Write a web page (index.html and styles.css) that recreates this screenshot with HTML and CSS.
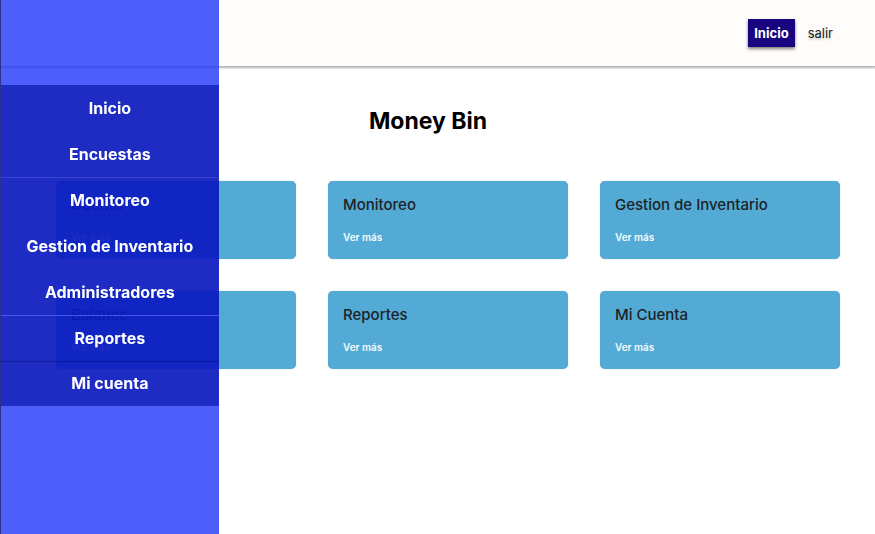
FILE: index.html
```html
<!DOCTYPE html>
<html lang="es">
<head>
  <meta charset="utf-8">
  <meta name="viewport" content="width=device-width, initial-scale=1">
  <title>Money Bin</title>
  <link rel="stylesheet" href="styles.css">
</head>
<body>
  <header class="topbar">
    <nav class="topbar-nav">
      <a class="topbar-link active" href="#">Inicio</a>
      <a class="topbar-link" href="#">salir</a>
    </nav>
  </header>
  <main class="content">
    <h1 class="title">Money Bin</h1>
    <section class="cards">
      <article class="card"><h2 class="card-title">Cuenta</h2><a class="card-link" href="#">Ver más</a></article>
      <article class="card"><h2 class="card-title">Monitoreo</h2><a class="card-link" href="#">Ver más</a></article>
      <article class="card"><h2 class="card-title">Gestion de Inventario</h2><a class="card-link" href="#">Ver más</a></article>
      <article class="card"><h2 class="card-title">Balance</h2><a class="card-link" href="#">Ver más</a></article>
      <article class="card"><h2 class="card-title">Reportes</h2><a class="card-link" href="#">Ver más</a></article>
      <article class="card"><h2 class="card-title">Mi Cuenta</h2><a class="card-link" href="#">Ver más</a></article>
    </section>
  </main>
  <aside class="sidebar">
    <nav class="menu">
      <a class="menu-item" href="#">Inicio</a>
      <a class="menu-item" href="#">Encuestas</a>
      <a class="menu-item line-light" href="#">Monitoreo</a>
      <a class="menu-item" href="#">Gestion de Inventario</a>
      <a class="menu-item" href="#">Administradores</a>
      <a class="menu-item line-bright" href="#">Reportes</a>
      <a class="menu-item line-dark" href="#">Mi cuenta</a>
    </nav>
  </aside>
</body>
</html>
```
FILE: styles.css
```css
* {
  box-sizing: border-box;
}

body {
  margin: 0;
  min-height: 100vh;
  background: #fff;
  color: #000;
  font-family: Inter, "Liberation Sans", sans-serif;
}

a {
  color: inherit;
  text-decoration: none;
}

.topbar {
  display: flex;
  align-items: center;
  justify-content: flex-end;
  height: 66px;
  padding: 0 36px;
  background: #fefdfb;
  box-shadow: 0 1px 2px 1px rgba(0, 0, 0, 0.3);
}

.topbar-nav {
  display: flex;
  gap: 7px;
}

.topbar-link {
  padding: 0 6px;
  font-size: 13px;
  line-height: 28px;
  color: #1c1c1c;
  text-shadow: 0 2px 2px rgba(0, 0, 0, 0.2);
}

.topbar-link.active {
  background: #190580;
  color: #fff;
  font-weight: 700;
  text-shadow: none;
  box-shadow: 0 2px 3px rgba(0, 0, 0, 0.5);
}

.content {
  padding: 39px 35px 32px 56px;
}

.title {
  margin: 0 40px 44px 0;
  font-size: 23px;
  font-weight: 700;
  line-height: 32px;
  text-align: center;
}

.cards {
  display: grid;
  grid-template-columns: repeat(3, 1fr);
  gap: 32px;
}

.card {
  display: flex;
  flex-direction: column;
  align-items: flex-start;
  gap: 13px;
  padding: 12px 15px 15px;
  border-radius: 5px;
  background: #53aad4;
  box-shadow: 0 0 1px rgba(0, 0, 0, 0.4);
}

.card-title {
  margin: 0;
  font-size: 15px;
  font-weight: 500;
  line-height: 24px;
  color: #1d2226;
}

.card-link {
  font-size: 10px;
  font-weight: 600;
  line-height: 14px;
  color: #f4fbff;
}

.sidebar {
  position: fixed;
  top: 0;
  bottom: 0;
  left: 0;
  width: 25%;
  padding-top: 85px;
  border-left: 1px solid rgba(20, 20, 70, 0.6);
  background: rgba(34, 54, 250, 0.8);
}

.menu {
  display: flex;
  flex-direction: column;
  background: rgba(0, 12, 160, 0.6);
}

.menu-item {
  color: #fff;
  font-size: 16px;
  font-weight: 700;
  line-height: 46px;
  text-align: center;
}

.line-light {
  box-shadow: inset 0 1px rgba(120, 130, 240, 0.3);
}

.line-bright {
  box-shadow: inset 0 1px rgba(90, 110, 255, 0.7);
}

.line-dark {
  line-height: 45px;
  box-shadow: inset 0 1px rgba(0, 0, 80, 0.35);
}
```
